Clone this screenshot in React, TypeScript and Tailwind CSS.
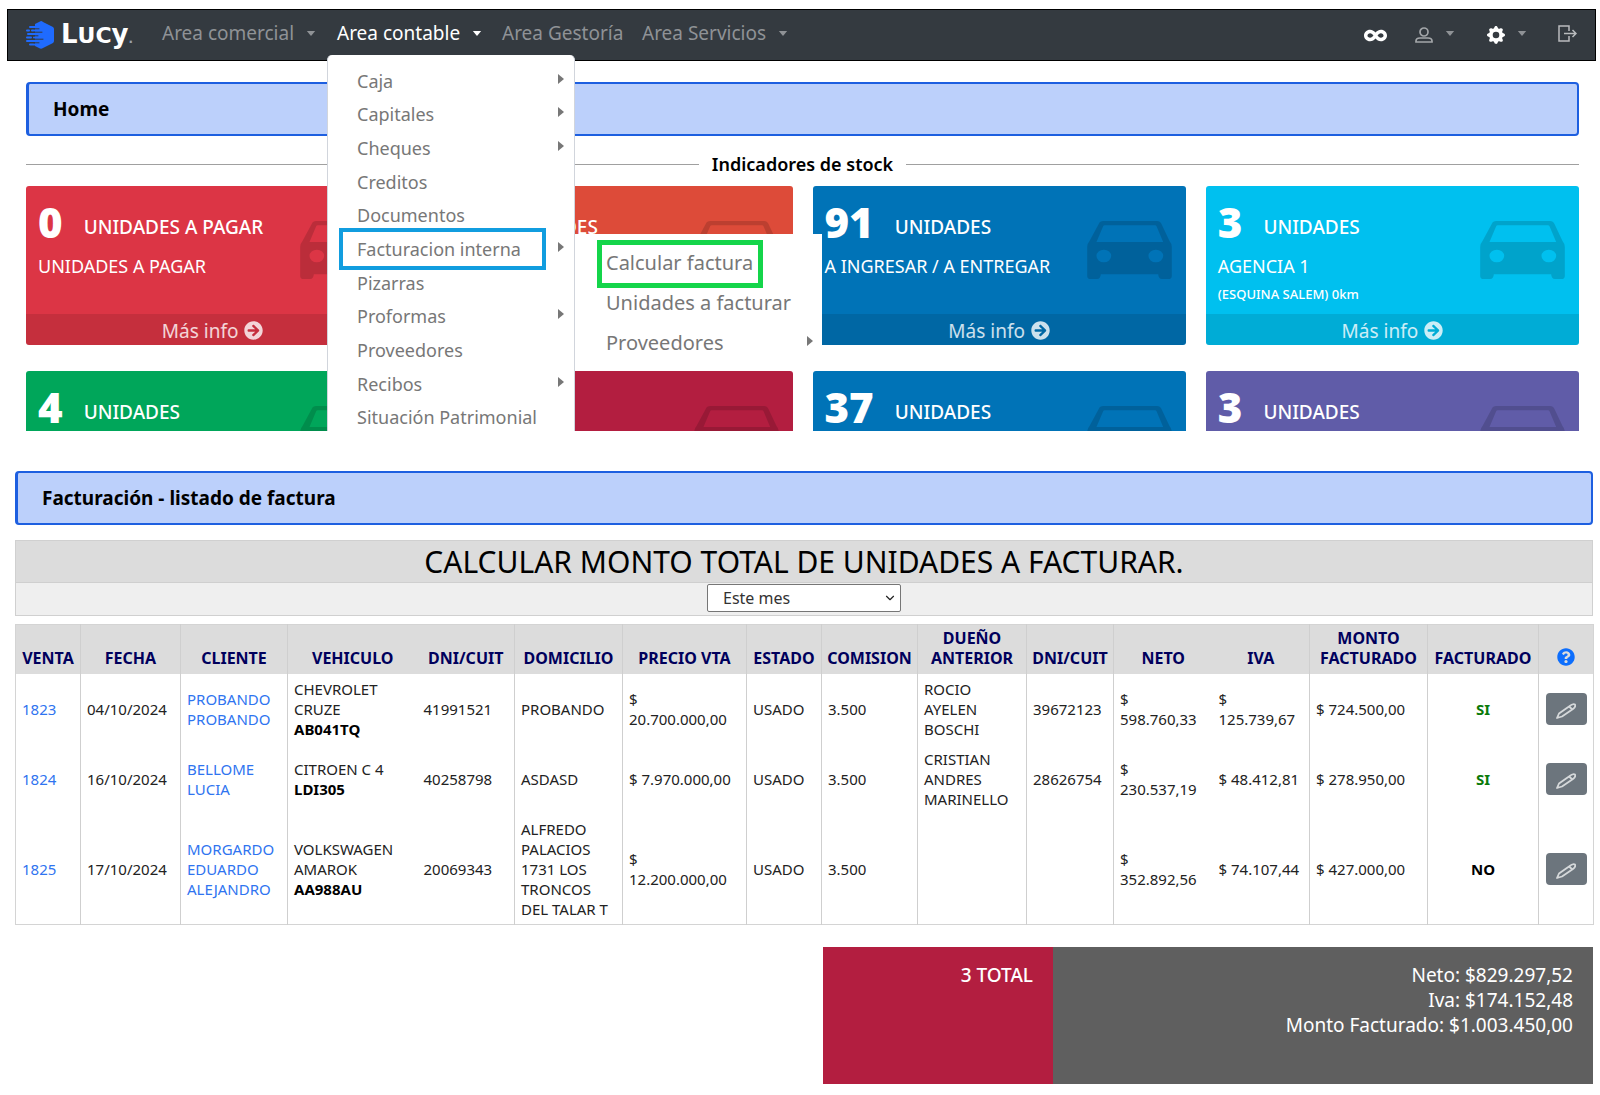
import React from "react";
import { FaArrowCircleRight, FaInfinity, FaQuestionCircle } from "react-icons/fa";
import { BsGearFill } from "react-icons/bs";
import { ChevronDown } from "lucide-react";

const CarIcon = () => (
  <svg viewBox="0 0 254 174" className="absolute right-[14px] top-[35px] h-[58px] w-[85px] fill-black/15" aria-hidden="true">
    <path
      fillRule="evenodd"
      d="M35 8Q38 0 48 0H210Q219 0 223 9L247 60Q254 68 254 78V164Q254 174 244 174H224Q214 174 213 160H41Q40 174 30 174H10Q0 174 0 164V78Q0 68 7 60ZM28 63H228L208 16Q207 13 203 13H53Q49 13 48 16ZM50 86A22 19 0 1 0 50 124A22 19 0 1 0 50 86ZM206 86A22 19 0 1 0 206 124A22 19 0 1 0 206 86Z"
    />
  </svg>
);

const Caret = () => (
  <svg viewBox="0 0 10 6" className="h-[5px] w-[10px] fill-current" aria-hidden="true">
    <path d="M0 0H10L5 6Z" />
  </svg>
);

const RightCaret = () => (
  <svg viewBox="0 0 6 10" className="mb-1 h-[10px] w-[6px] fill-[#777]" aria-hidden="true">
    <path d="M0 0L6 5L0 10Z" />
  </svg>
);

const LogoMark = () => (
  <svg viewBox="0 0 28 28" className="h-[28px] w-[28px]" aria-hidden="true">
    <path d="M15 0Q16 0 17 1L27 6Q28 7 28 8V20Q28 21 27 22L17 27Q15 28.500 13 27L9 25V3L13 1Z" fill="#1f6bff" />
    <g stroke="#1f6bff" strokeWidth="2" strokeLinecap="round">
      <path d="M4 6H10M1 9.500H3M6 9.500H10M2 13H10M1 16.500H5M8 16.500H10M1 20H10M4 23.500H10" />
    </g>
    <g stroke="#343a40" strokeWidth="1" strokeLinecap="round">
      <path d="M8 7.800H13M8 11.200H16M8 14.800H12M8 18.200H17M8 21.800H13" />
    </g>
  </svg>
);

const UserIcon = () => (
  <svg viewBox="0 0 18 16" className="h-4 w-[18px] fill-none stroke-[#a3a6a9]" strokeWidth="1.7" aria-hidden="true">
    <circle cx="9" cy="5" r="4" />
    <path d="M1 15V14Q1 11 5 11H13Q17 11 17 14V15Z" />
  </svg>
);

const ExitIcon = () => (
  <svg viewBox="0 0 19 17" className="mb-1 h-[17px] w-[19px] fill-none stroke-[#b9bbbd]" strokeWidth="1.5" aria-hidden="true">
    <path d="M11 6V1H1V16H11V11M6 8.5H18M14.500 5L18 8.500L14.500 12" />
  </svg>
);

const PencilIcon = () => (
  <svg viewBox="0 0 20 16" className="mt-1 h-4 w-5 fill-none stroke-[#d5d8da]" strokeWidth="1.8" strokeLinejoin="round" aria-hidden="true">
    <path d="M1 15L3 10.500L13 3.500Q17 0 19 1.500Q20 4 17 6L6 13.500Z" />
    <path d="M13 3.500L16.500 6.500" />
  </svg>
);

const menuItems = [
  { label: "Caja", sub: true },
  { label: "Capitales", sub: true },
  { label: "Cheques", sub: true },
  { label: "Creditos" },
  { label: "Documentos" },
  { label: "Facturacion interna", sub: true, active: true },
  { label: "Pizarras" },
  { label: "Proformas", sub: true },
  { label: "Proveedores" },
  { label: "Recibos", sub: true },
  { label: "Situación Patrimonial" },
];

function AreaMenu() {
  return (
    <div className="absolute left-[-10px] top-[46px] z-20 w-[248px] rounded-t-[5px] border-x border-gray-300 bg-white pt-[9px]">
      <ul className="grid h-[370px] auto-rows-fr">
        {menuItems.map((item) => (
          <li key={item.label} className="relative flex items-center justify-between pl-[29px] pr-[10px] text-[18px] leading-6 text-[#777]">
            <a href="#">{item.label}</a>
            {item.sub && <RightCaret />}
            {item.active && (
              <span className="pointer-events-none absolute left-[11px] top-[-4px] h-[42px] w-[207px] border-4 border-[#119ddf]" />
            )}
          </li>
        ))}
      </ul>
      <ul className="absolute left-[247px] top-[179px] w-[247px] bg-white pb-2 pt-[9px] text-[20px] leading-[40px] text-[#777]">
        <li className="relative pl-[31px]">
          <a href="#">Calcular factura</a>
          <span className="pointer-events-none absolute left-[22px] top-[-3px] h-[48px] w-[166px] border-[5px] border-[#14d54a]" />
        </li>
        <li className="pl-[31px]">
          <a href="#">Unidades a facturar</a>
        </li>
        <li className="flex items-center justify-between pl-[31px] pr-[9px]">
          <a href="#">Proveedores</a>
          <RightCaret />
        </li>
      </ul>
    </div>
  );
}

function NavBar() {
  return (
    <nav className="ml-[7px] mr-1 flex h-[52px] items-center border border-black bg-[#343a40] pl-[18px] pr-[18px] text-[19px] text-[#8f9296]">
      <a href="#" className="flex w-[126px] items-center gap-[7px]" aria-label="Lucy">
        <LogoMark />
        <span className="flex items-baseline pt-[2px] font-['DejaVu_Sans',sans-serif] text-[26px] font-bold leading-8 text-white">
          L<span className="text-[22px]">UC</span>y<span className="text-[12px] text-gray-400">.</span>
        </span>
      </a>
      <ul className="flex flex-1 items-center pb-1 leading-6">
        <li className="ml-[10px] w-[175px]">
          <button className="flex items-center gap-3">Area comercial <Caret /></button>
        </li>
        <li className="relative w-[165px] text-white">
          <button className="flex items-center gap-3">Area contable <Caret /></button>
          <div className="absolute left-0 top-[-12px]">
            <AreaMenu />
          </div>
        </li>
        <li className="w-[140px]">
          <a href="#">Area Gestoría</a>
        </li>
        <li>
          <button className="flex items-center gap-3">Area Servicios <Caret /></button>
        </li>
      </ul>
      <div className="flex items-center">
        <button aria-label="Infinito" className="mr-[28px] text-white"><FaInfinity size={23} /></button>
        <button aria-label="Usuario" className="mr-[32px] flex items-center gap-3">
          <UserIcon />
          <span className="pb-1"><Caret /></span>
        </button>
        <button aria-label="Configuración" className="mr-[31px] flex items-center gap-3">
          <BsGearFill size={18} className="text-white" />
          <span className="pb-1"><Caret /></span>
        </button>
        <button aria-label="Salir"><ExitIcon /></button>
      </div>
    </nav>
  );
}

type Card = { n?: string; title?: string; sub?: string; note?: string; color: string };

const cards: Card[] = [
  { n: "0", title: "UNIDADES A PAGAR", sub: "UNIDADES A PAGAR", color: "bg-[#dc3545]" },
  { n: "12", title: "UNIDADES", color: "bg-[#dd4b39]" },
  { n: "91", title: "UNIDADES", sub: "A INGRESAR / A ENTREGAR", color: "bg-[#0073b7]" },
  { n: "3", title: "UNIDADES", sub: "AGENCIA 1", note: "(ESQUINA SALEM) 0km", color: "bg-[#00c0ef]" },
];

const partialCards: Card[] = [
  { n: "4", title: "UNIDADES", color: "bg-[#00a65a]" },
  { color: "bg-[#b31e40]" },
  { n: "37", title: "UNIDADES", color: "bg-[#0073b7]" },
  { n: "3", title: "UNIDADES", color: "bg-[#605ca8]" },
];

function CardHeading({ card }: { card: Card }) {
  return (
    <h3 className="flex items-center gap-[21px] leading-[48px]">
      <span className="text-[42px] font-black">{card.n}</span>
      <span className="pt-[10px] text-[19px] font-medium leading-6">{card.title}</span>
    </h3>
  );
}

function StockCard({ card }: { card: Card }) {
  return (
    <article className={`relative flex h-[159px] flex-col rounded-[3px] text-white ${card.color}`}>
      <CarIcon />
      <div className="flex-1 px-3 pt-3">
        <CardHeading card={card} />
        {card.sub && <p className="pt-2 text-[18px] leading-6">{card.sub}</p>}
        {card.note && <p className="pt-[6px] text-[13px] font-medium leading-5">{card.note}</p>}
      </div>
      <a href="#" className="flex h-[31px] items-center justify-center gap-[6px] rounded-b-[3px] bg-black/10 pt-[2px] text-[19px] leading-6 text-white/80">
        Más info <FaArrowCircleRight size={19} />
      </a>
    </article>
  );
}

function PartialCard({ card }: { card: Card }) {
  return (
    <article className={`relative h-[60px] overflow-hidden rounded-t-[3px] px-3 pt-3 text-white ${card.color}`}>
      <CarIcon />
      {card.n && <CardHeading card={card} />}
    </article>
  );
}

function Banner({ children }: { children: React.ReactNode }) {
  return (
    <h1 className="flex h-[54px] items-center rounded-[4px] border-2 border-l-[3px] border-[#1d5fe0] bg-[#bcd0fb] pl-6 text-[19px] font-bold text-black">
      {children}
    </h1>
  );
}

const columns = [
  { label: "VENTA", width: 65, line: true },
  { label: "FECHA", width: 100, line: true },
  { label: "CLIENTE", width: 107, line: true },
  { label: "VEHICULO", width: 130 },
  { label: "DNI/CUIT", width: 97, line: true },
  { label: "DOMICILIO", width: 108, line: true },
  { label: "PRECIO VTA", width: 124, line: true },
  { label: "ESTADO", width: 75, line: true },
  { label: "COMISION", width: 96, line: true },
  { label: "DUEÑO ANTERIOR", width: 109, line: true },
  { label: "DNI/CUIT", width: 87, line: true },
  { label: "NETO", width: 99 },
  { label: "IVA", width: 97, line: true },
  { label: "MONTO FACTURADO", width: 118, line: true },
  { label: "FACTURADO", width: 111, line: true },
  { label: "", width: 55 },
];

const rows = [
  {
    id: "1823", date: "04/10/2024", client: "PROBANDO PROBANDO", car: "CHEVROLET CRUZE", plate: "AB041TQ",
    rest: ["41991521", "PROBANDO", "$\n20.700.000,00", "USADO", "3.500", "ROCIO\nAYELEN\nBOSCHI", "39672123", "$\n598.760,33", "$\n125.739,67", "$ 724.500,00"],
    done: "SI",
  },
  {
    id: "1824", date: "16/10/2024", client: "BELLOME LUCIA", car: "CITROEN C 4", plate: "LDI305",
    rest: ["40258798", "ASDASD", "$ 7.970.000,00", "USADO", "3.500", "CRISTIAN\nANDRES\nMARINELLO", "28626754", "$\n230.537,19", "$ 48.412,81", "$ 278.950,00"],
    done: "SI",
  },
  {
    id: "1825", date: "17/10/2024", client: "MORGARDO EDUARDO ALEJANDRO", car: "VOLKSWAGEN AMAROK", plate: "AA988AU",
    rest: ["20069343", "ALFREDO\nPALACIOS\n1731 LOS\nTRONCOS\nDEL TALAR T", "$\n12.200.000,00", "USADO", "3.500", "", "", "$\n352.892,56", "$ 74.107,44", "$ 427.000,00"],
    done: "NO",
  },
];

function InvoiceTable() {
  return (
    <table className="w-full table-fixed border-collapse border border-[#d4d4d4] text-[15px] leading-5 text-[#222]">
      <colgroup>
        {columns.map((c, i) => (
          <col key={i} style={{ width: c.width }} className={c.line ? "border-r border-[#cfcfcf]" : ""} />
        ))}
      </colgroup>
      <thead className="bg-[#dcdcdc] text-[16px] text-[#00005c]">
        <tr>
          {columns.map((c, i) => (
            <th key={i} className="pb-[6px] pt-[3px] align-bottom font-bold">
              {c.label || (
                <button aria-label="Ayuda" className="mb-[2px] align-bottom text-[#0d6efd]">
                  <FaQuestionCircle size={18} />
                </button>
              )}
            </th>
          ))}
        </tr>
      </thead>
      <tbody>
        {rows.map((r) => (
          <tr key={r.id}>
            <td className="px-[6px] py-[5px]"><a href="#" className="text-[#2f74f0]">{r.id}</a></td>
            <td className="px-[6px] py-[5px]">{r.date}</td>
            <td className="px-[6px] py-[5px]"><a href="#" className="text-[#2f74f0]">{r.client}</a></td>
            <td className="px-[6px] py-[5px]">
              {r.car}
              <b className="block text-black">{r.plate}</b>
            </td>
            {r.rest.map((v, i) => (
              <td key={i} className="whitespace-pre-line py-[5px] pl-[6px]">{v}</td>
            ))}
            <td className={`py-[5px] text-center font-bold ${r.done === "SI" ? "text-[#0a7a0a]" : "text-black"}`}>{r.done}</td>
            <td className="py-[5px]">
              <button aria-label={`Editar ${r.id}`} className="mx-auto flex h-8 w-[41px] items-center justify-center rounded-[4px] bg-[#6c757d]">
                <PencilIcon />
              </button>
            </td>
          </tr>
        ))}
      </tbody>
    </table>
  );
}

export default function App() {
  return (
    <div className="min-h-screen bg-white pb-[11px] font-['Noto_Sans',sans-serif]">
      <section className="overflow-hidden pt-[9px]">
        <NavBar />
        <div className="ml-[26px] mr-[21px] pt-[21px]">
          <Banner>Home</Banner>
          <div className="flex items-center gap-[13px] pb-[9px] pt-4">
            <hr className="flex-1 border-[#a0a0a0]" />
            <h2 className="text-[18px] font-semibold leading-[25px] text-black">Indicadores de stock</h2>
            <hr className="flex-1 border-[#a0a0a0]" />
          </div>
          <div className="grid grid-cols-4 gap-x-5">
            {cards.map((c, i) => <StockCard key={i} card={c} />)}
          </div>
          <div className="mt-[26px] grid grid-cols-4 gap-x-5">
            {partialCards.map((c, i) => <PartialCard key={i} card={c} />)}
          </div>
        </div>
      </section>
      <section className="ml-[15px] mr-[7px] pt-10">
        <Banner>Facturación - listado de factura</Banner>
        <div className="mb-2 mt-[15px] border border-[#d0d0d0] bg-[#efefef]">
          <h2 className="border-b border-[#cfcfcf] bg-[#dcdcdc] text-center text-[30px] leading-[41px] text-black">
            CALCULAR MONTO TOTAL DE UNIDADES A FACTURAR.
          </h2>
          <div className="flex h-[32px] justify-center">
            <div className="relative mt-px h-[28px] w-[194px]">
              <select aria-label="Período" className="h-full w-full appearance-none rounded-[2px] border border-[#767676] bg-white pl-[15px] text-[16px] text-[#333]">
                <option>Este mes</option>
              </select>
              <ChevronDown size={14} className="pointer-events-none absolute right-1 top-[7px] text-[#222]" />
            </div>
          </div>
        </div>
        <InvoiceTable />
        <div className="ml-auto mt-[22px] flex h-[137px] w-[770px] text-right text-[19px] leading-[25px] text-white">
          <div className="w-[230px] bg-[#b31e40] pr-5 pt-4 font-medium">3 TOTAL</div>
          <div className="flex-1 bg-[#5f5f5f] pr-5 pt-4">
            <p>Neto: $829.297,52</p>
            <p>Iva: $174.152,48</p>
            <p>Monto Facturado: $1.003.450,00</p>
          </div>
        </div>
      </section>
    </div>
  );
}
